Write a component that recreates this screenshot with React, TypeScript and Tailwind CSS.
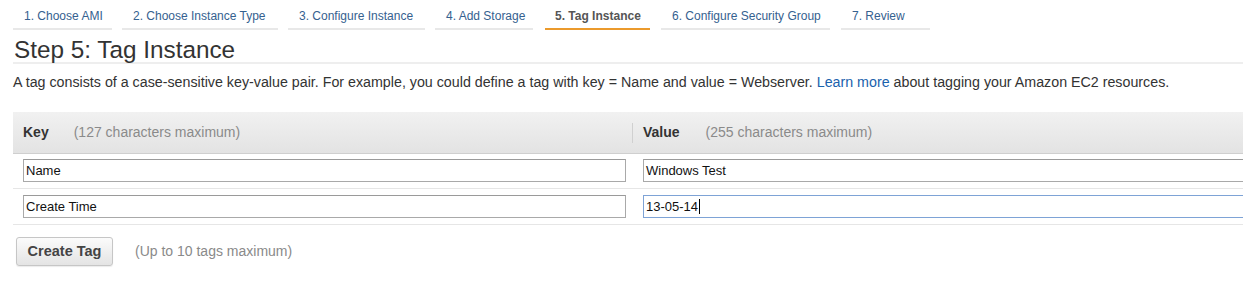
import React from "react";

const tabs: [string, string][] = [
  ["1. Choose AMI", "w-[99px]"],
  ["2. Choose Instance Type", "w-[156px]"],
  ["3. Configure Instance", "w-[137px]"],
  ["4. Add Storage", "w-[98px]"],
  ["5. Tag Instance", "w-[105px]"],
  ["6. Configure Security Group", "w-[169px]"],
  ["7. Review", "w-[89px]"],
];
const gaps = ["", "ml-[10px]", "ml-[10px]", "ml-[10px]", "ml-[12px]", "ml-[11px]", "ml-[11px]"];

export default function App() {
  return (
    <div
      className="w-[1243px] h-[284px] overflow-hidden bg-white text-[#333]"
      style={{ fontFamily: '"Liberation Sans", Arial, sans-serif' }}
    >
      <div className="flex pl-[13px]">
        {tabs.map(([t, w], i) =>
          i === 4 ? (
            <div
              key={t}
              className={`${w} ${gaps[i]} pl-[10px] pt-[9px] pb-[5px] leading-[14px] text-[12px] font-bold text-[#555] border-b-[2px] border-[#eb9a2c] whitespace-nowrap`}
            >
              {t}
            </div>
          ) : (
            <div
              key={t}
              className={`${w} ${gaps[i]} pl-[11px] pt-[9px] pb-[5px] leading-[14px] text-[12px] text-[#35618f] border-b-[2px] border-[#e8e8e8] whitespace-nowrap`}
            >
              {t}
            </div>
          )
        )}
      </div>
      <div className="ml-[13px]">
        <h1 className="mt-[7px] text-[24.3px] leading-[25px] text-[#333] border-b-[2px] border-[#eeeeee] pl-[1px]">
          Step 5: Tag Instance
        </h1>
        <p className="mt-[10px] text-[14.25px] leading-[16px] text-[#333] whitespace-nowrap">
          A tag consists of a case-sensitive key-value pair. For example, you could define a tag with key = Name and value = Webserver.{" "}
          <span className="text-[#1a62ad]">Learn more</span> about tagging your Amazon EC2 resources.
        </p>
        <div className="mt-[22px] h-[42px] flex items-center bg-gradient-to-b from-[#f1f1f1] to-[#e3e3e3] border-b border-[#cfcfcf] text-[14px]">
          <div className="w-[619px] flex items-center pl-[10px]">
            <span className="font-bold">Key</span>
            <span className="ml-[25px] text-[#8a8a8a]">(127 characters maximum)</span>
          </div>
          <div className="h-[20px] border-l border-[#d0d0d0]" />
          <div className="flex items-center pl-[10px]">
            <span className="font-bold">Value</span>
            <span className="ml-[26px] text-[#8a8a8a]">(255 characters maximum)</span>
          </div>
        </div>
        <Row k="Name" v="Windows Test" first />
        <Row k="Create Time" v="13-05-14" focused />
        <div className="flex items-center mt-[12px]">
          <button className="ml-[3px] w-[97px] h-[29px] rounded-[3px] border border-[#c6c6c6] bg-gradient-to-b from-[#fbfbfb] to-[#e4e4e4] text-[14.5px] font-bold text-[#444] shadow-[0_1px_1px_rgba(0,0,0,0.08)]">
            Create Tag
          </button>
          <span className="ml-[22px] text-[14px] text-[#8a8a8a]">(Up to 10 tags maximum)</span>
        </div>
      </div>
    </div>
  );
}

function Row({ k, v, first, focused }: { k: string; v: string; first?: boolean; focused?: boolean }) {
  return (
    <div className={`flex items-center ${first ? "pt-[5px]" : "pt-[6px]"} pb-[6px] border-b border-[#e6e6e6]`}>
      <div className="w-[620px] pl-[10px]">
        <div className="w-[603px] h-[23px] border border-[#a9a9a9] border-t-[#9a9a9a] flex items-center pl-[2px] text-[13px] text-[#111]">
          {k}
        </div>
      </div>
      <div className="pl-[10px] flex-1">
        <div
          className={`h-[23px] border ${focused ? "border-[#7ea3d6]" : "border-[#a9a9a9] border-t-[#9a9a9a]"} flex items-center pl-[2px] text-[13px] text-[#111] -mr-[20px]`}
        >
          {v}
          {focused && <span className="ml-[1px] w-px h-[15px] bg-black" />}
        </div>
      </div>
    </div>
  );
}
